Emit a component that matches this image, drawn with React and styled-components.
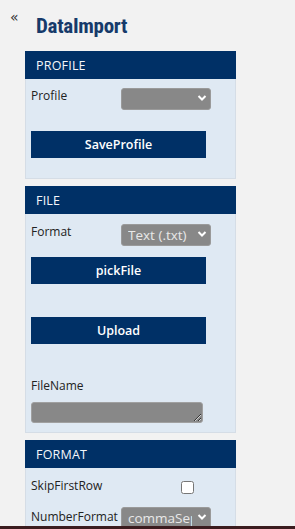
import React from 'react'
import styled, { createGlobalStyle } from 'styled-components'

const GlobalStyle = createGlobalStyle`
    html, body {
        margin: 0;
        padding: 0;
        background: #f2f2f2;
        font-family: 'Open Sans', 'Liberation Sans', sans-serif;
    }
`

const navy = '#003066'

const Sidebar = styled.div`
    width: 240px;
`

const TitleBar = styled.div`
    display: flex;
    align-items: flex-start;
    height: 51px;
`

const Collapse = styled.span`
    font-family: 'DejaVu Sans', sans-serif;
    font-size: 14px;
    line-height: 14px;
    color: #333;
    margin: 10px 0 0 10px;
    width: 26px;
`

const Title = styled.h1`
    margin: 14px 0 0 0;
    font-family: 'Roboto', sans-serif;
    font-stretch: condensed;
    font-weight: 700;
    font-size: 21px;
    line-height: 24px;
    color: #163a6a;
    letter-spacing: -0.3px;
`

const Panel = styled.section`
    margin: 0 0 7px 25px;
    width: 211px;
`

const PanelHeader = styled.div`
    background: ${navy};
    color: #f4f6fa;
    height: 28px;
    display: flex;
    align-items: center;
    padding-left: 11px;
    font-size: 12.5px;
    letter-spacing: 0.2px;
`

const PanelBody = styled.div`
    background: #dfe9f3;
    border: 1px solid #d5dde6;
    border-top: none;
    padding: ${p => p.$pad || '8px 0 20px 5px'};
`

const Row = styled.div`
    display: flex;
    align-items: flex-start;
    margin-top: ${p => p.$top || 0}px;
    height: ${p => p.$h || 22}px;
`

const Label = styled.label`
    font-size: 12px;
    color: #222;
    width: 90px;
    flex: none;
    white-space: nowrap;
    line-height: 16px;
    margin-top: ${p => p.$top || 1}px;
`

const SelectWrap = styled.div`
    position: relative;
    width: 90px;
    height: 22px;
`

const Select = styled.select`
    appearance: none;
    width: 90px;
    height: 22px;
    box-sizing: border-box;
    background: #888888;
    border: 1px solid #9a9a9a;
    border-radius: 3px;
    color: #e8e8e8;
    font-family: 'Open Sans', sans-serif;
    font-size: 13.5px;
    padding: 0 18px 0 6px;
    overflow: hidden;
    white-space: nowrap;
    outline: none;
`

const Chevron = styled.svg`
    position: absolute;
    right: 4px;
    top: 7px;
    pointer-events: none;
`

const Button = styled.button`
    display: block;
    width: 175px;
    height: 27px;
    background: ${navy};
    color: #fff;
    border: none;
    font-family: 'Open Sans', sans-serif;
    font-weight: 600;
    font-size: 12.5px;
    margin-top: ${p => p.$top || 0}px;
    padding: 0;
`

const TextArea = styled.textarea`
    display: block;
    box-sizing: border-box;
    width: 172px;
    height: 21px;
    background: #888888;
    border: 1px solid #a0a0a0;
    border-radius: 3px;
    margin-top: ${p => p.$top || 0}px;
    font-family: 'Open Sans', sans-serif;
    padding: 0;
`

const Check = styled.input`
    width: 13px;
    height: 13px;
    margin: 4px 0 0 60px;
`

const Footer = styled.div`
    position: fixed;
    left: 0;
    right: 0;
    bottom: 0;
    height: 3px;
    background: #3b1c1f;
`

const Dropdown = ({ value, options = [] }) => (
    <SelectWrap>
        <Select defaultValue={value}>
            {options.map(o => <option key={o}>{o}</option>)}
        </Select>
        <Chevron width='10' height='8' viewBox='0 0 10 8'>
            <path d='M1.5 2 L5 5.5 L8.5 2' fill='none' stroke='#fff' strokeWidth='2' />
        </Chevron>
    </SelectWrap>
)

const App = () => (
    <>
        <GlobalStyle />
        <Sidebar>
            <TitleBar>
                <Collapse>«</Collapse>
                <Title>DataImport</Title>
            </TitleBar>

            <Panel>
                <PanelHeader>PROFILE</PanelHeader>
                <PanelBody $pad='8px 0 20px 5px'>
                    <Row>
                        <Label>Profile</Label>
                        <Dropdown value='' options={['']} />
                    </Row>
                    <Button $top={22}>SaveProfile</Button>
                </PanelBody>
            </Panel>

            <Panel>
                <PanelHeader>FILE</PanelHeader>
                <PanelBody $pad='9px 0 9px 5px'>
                    <Row>
                        <Label>Format</Label>
                        <Dropdown value='Text (.txt)' options={['Text (.txt)', 'CSV (.csv)']} />
                    </Row>
                    <Button $top={12}>pickFile</Button>
                    <Button $top={33}>Upload</Button>
                    <Row $top={33} $h={18}>
                        <Label $top={0}>FileName</Label>
                    </Row>
                    <TextArea $top={7} />
                </PanelBody>
            </Panel>

            <Panel>
                <PanelHeader>FORMAT</PanelHeader>
                <PanelBody $pad='9px 0 10px 5px'>
                    <Row $h={29}>
                        <Label>SkipFirstRow</Label>
                        <Check type='checkbox' />
                    </Row>
                    <Row>
                        <Label $top={3}>NumberFormat</Label>
                        <Dropdown value='commaSeparated' options={['commaSeparated', 'pointSeparated']} />
                    </Row>
                </PanelBody>
            </Panel>
        </Sidebar>
        <Footer />
    </>
)

export default App
